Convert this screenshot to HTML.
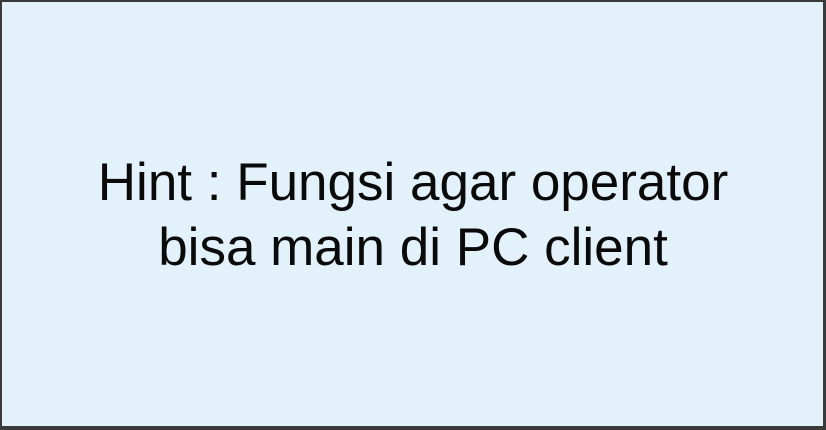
<!DOCTYPE html>
<html><head><style>
html,body{margin:0;padding:0;width:826px;height:430px;overflow:hidden;background:#fff}
.box{position:absolute;left:0;top:0;background:#e3f1fb;border:2px solid #3a3a3a;border-bottom-width:4px;border-right-width:3px;box-sizing:border-box;width:826px;height:430px}
.t{position:absolute;left:0;width:826px;text-align:center;font-family:"Liberation Sans",sans-serif;font-size:53px;color:#0a0a0a;line-height:65px;top:150px}
</style></head><body>
<div class="box"></div>
<div class="t">Hint : Fungsi agar operator<br>bisa main di PC client</div>
</body></html>
